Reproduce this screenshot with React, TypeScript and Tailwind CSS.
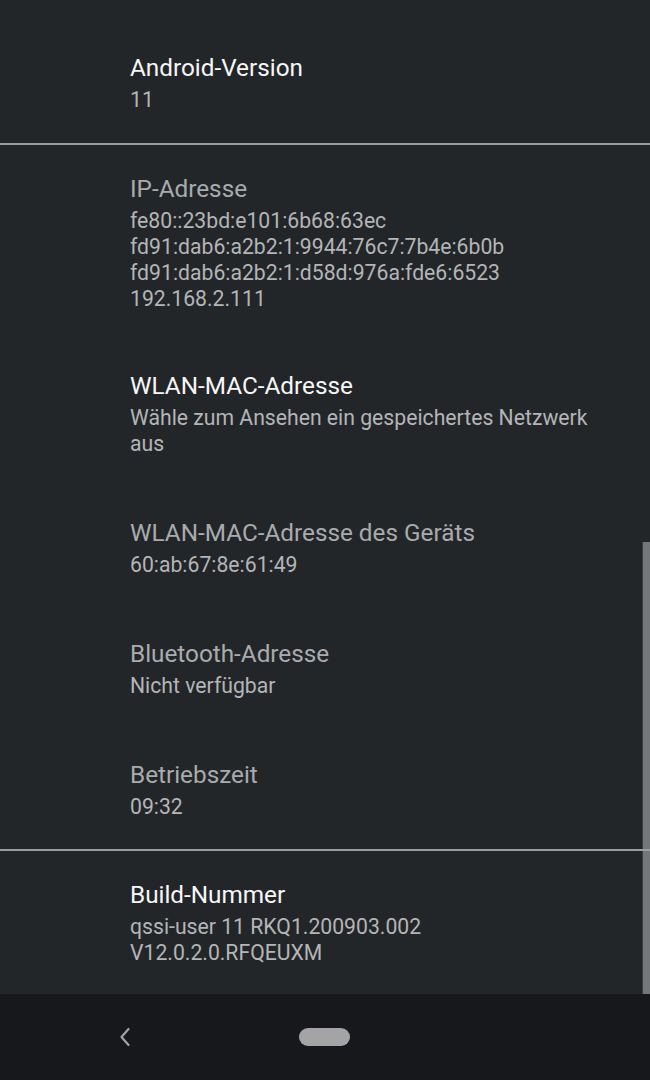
// Android "Über das Telefon" status screen (dark theme)

interface Pref {
  title: string
  lines: string[]
  disabled?: boolean
  pt?: string
  pb?: string
}

const topGroup: Pref[] = [{ title: 'Android-Version', lines: ['11'] }]

const midGroup: Pref[] = [
  {
    title: 'IP-Adresse',
    lines: [
      'fe80::23bd:e101:6b68:63ec',
      'fd91:dab6:a2b2:1:9944:76c7:7b4e:6b0b',
      'fd91:dab6:a2b2:1:d58d:976a:fde6:6523',
      '192.168.2.111',
    ],
    disabled: true,
    pt: 'pt-[28px]',
    pb: 'pb-[28px]',
  },
  { title: 'WLAN-MAC-Adresse', lines: ['Wähle zum Ansehen ein gespeichertes Netzwerk aus'] },
  { title: 'WLAN-MAC-Adresse des Geräts', lines: ['60:ab:67:8e:61:49'], disabled: true },
  { title: 'Bluetooth-Adresse', lines: ['Nicht verfügbar'], disabled: true },
  { title: 'Betriebszeit', lines: ['09:32'], disabled: true, pb: 'pb-[29px]' },
]

const bottomGroup: Pref[] = [
  { title: 'Build-Nummer', lines: ['qssi-user 11 RKQ1.200903.002', 'V12.0.2.0.RFQEUXM'], pt: 'pt-[28px]' },
]

function PrefItem({ title, lines, disabled, pt, pb }: Pref) {
  return (
    <div className={`pl-[130px] pr-[44px] ${pt ?? 'pt-[30px]'} ${pb ?? 'pb-[30px]'}`}>
      <div className={`text-[24.3px] leading-[32px] ${disabled ? 'text-[#a9abad]' : 'text-[#f7f7f7]'}`}>{title}</div>
      <div className="mt-[3px] text-[21.2px] leading-[26px] text-[#b3b5b7]">
        {lines.map((l) => (
          <div key={l}>{l}</div>
        ))}
      </div>
    </div>
  )
}

function Divider() {
  return <div className="relative z-10 h-[2px] bg-[#9c9d9e]" />
}

export default function App() {
  return (
    <div className="relative flex h-[1080px] w-[650px] flex-col overflow-hidden bg-[#232629]" style={{ fontFamily: 'Roboto, "Noto Sans", sans-serif' }}>
      {/* scroll indicator */}
      <div className="absolute right-0 top-[542px] h-[452px] w-[8px] border-l border-[#3a3d40] bg-[#74777a]" />

      <div className="relative flex-1 overflow-hidden">
        <div className="h-[22px]" />
        {topGroup.map((p) => <PrefItem key={p.title} {...p} />)}
        <Divider />
        {midGroup.map((p) => <PrefItem key={p.title} {...p} />)}
        <Divider />
        {bottomGroup.map((p) => <PrefItem key={p.title} {...p} />)}
      </div>

      {/* navigation bar */}
      <div className="relative flex h-[86px] shrink-0 items-center bg-[#16181b]">
        <svg className="ml-[117px] h-[22px] w-[16px]" viewBox="0 0 16 22" fill="none">
          <path d="M11.5 3 L4.5 11 L11.5 19" stroke="#a2a2a2" strokeWidth="2.2" strokeLinecap="round" strokeLinejoin="round" />
        </svg>
        <div className="ml-[166px] h-[18px] w-[51px] rounded-full bg-[#a4a4a4]" />
      </div>
    </div>
  )
}
